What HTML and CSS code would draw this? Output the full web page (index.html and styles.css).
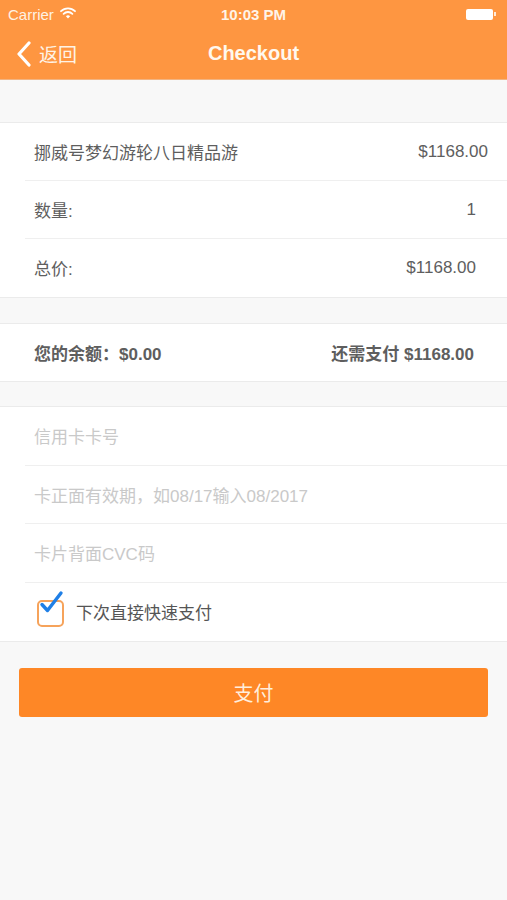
FILE: index.html
```html
<!DOCTYPE html>
<html lang="zh-CN">
<head>
<meta charset="utf-8"/>
<meta content="width=device-width, initial-scale=1.0" name="viewport"/>
<title>Checkout</title>
<link rel="stylesheet" href="styles.css">
</head>
<body>
<div class="topbar">
  <div class="status">
    <div class="carrier">Carrier
      <svg class="wifi" width="16" height="12" viewBox="0 0 16 12">
        <path d="M1 4.2a10 10 0 0 1 14 0" fill="none" stroke="#fff" stroke-width="1.8" stroke-linecap="round"/>
        <path d="M3.6 6.8a6.3 6.3 0 0 1 8.8 0" fill="none" stroke="#fff" stroke-width="1.8" stroke-linecap="round"/>
        <path d="M8 11.5 5.9 9.2a3 3 0 0 1 4.2 0z" fill="#fff"/>
      </svg>
    </div>
    <div class="time">10:03 PM</div>
    <div class="battery"><span class="cell"></span><span class="tip"></span></div>
  </div>
  <div class="nav">
    <div class="back">
      <svg width="18" height="26" viewBox="0 0 18 26"><path d="M14 2 4 13l10 11" fill="none" stroke="#fff" stroke-width="3.2" stroke-linecap="round" stroke-linejoin="round"/></svg>
      <span>返回</span>
    </div>
    <div class="title">Checkout</div>
  </div>
</div>

<div class="group first">
  <div class="row"><span>挪威号梦幻游轮八日精品游</span><span class="val wide">$1168.00</span></div>
  <div class="row"><span>数量:</span><span class="val">1</span></div>
  <div class="row"><span>总价:</span><span class="val">$1168.00</span></div>
</div>

<div class="group">
  <div class="row strong"><span>您的余额：$0.00</span><span class="val">还需支付 $1168.00</span></div>
</div>

<div class="group card">
  <div class="row hint">信用卡卡号</div>
  <div class="row hint">卡正面有效期，如08/17输入08/2017</div>
  <div class="row hint">卡片背面CVC码</div>
  <div class="row check">
    <span class="box">
      <svg width="30" height="30" viewBox="0 0 30 30"><path d="M6 14.5l5.5 6L25 3" fill="none" stroke="#1f7fe6" stroke-width="3.4" stroke-linecap="round" stroke-linejoin="round"/></svg>
    </span>
    <span>下次直接快速支付</span>
  </div>
</div>

<div class="pay">支付</div>
</body>
</html>
```

FILE: styles.css
```css
body { margin: 0; background: #f8f8f8; font-family: "Liberation Sans", "Noto Sans CJK SC", sans-serif; color: #5e5e5e; height: 900px; }
.topbar { background: #fe9641; color: #fff; height: 79px; border-bottom: 1px solid #f2b482; }
.status { height: 28px; display: flex; align-items: center; justify-content: space-between; padding: 0 8px; font-size: 15px; position: relative; }
.carrier { display: flex; align-items: center; gap: 6px; color: #fff2e4; }
.wifi { margin-top: -3px; }
.time { position: absolute; left: 0; right: 0; text-align: center; font-weight: bold; font-size: 15px; color: #fff4e8; }
.battery { display: flex; align-items: center; margin-right: 3px; }
.cell { width: 27px; height: 11px; background: #fff; border-radius: 2px; }
.tip { width: 2px; height: 4px; background: #fff; margin-left: 1px; opacity: 0.8; }
.nav { height: 51px; display: flex; align-items: center; position: relative; }
.back { display: flex; align-items: center; gap: 6px; padding-left: 15px; font-size: 19px; color: #fff3e6; position: relative; z-index: 1; }
.title { position: absolute; left: 0; right: 0; text-align: center; font-size: 20px; font-weight: bold; color: #fff8ee; }

.group { background: #fff; border-top: 1px solid #ebebeb; border-bottom: 1px solid #ebebeb; margin-top: 25px; }
.group.first { margin-top: 42px; }
.group.card { margin-top: 24px; }
.row { height: 58px; display: flex; align-items: center; justify-content: space-between; margin-left: 25px; padding: 0 31px 0 9px; font-size: 17px; border-bottom: 1px solid #efefef; box-sizing: border-box; }
.row:last-child { border-bottom: none; height: 57.5px; }
.val.wide { margin-right: -12px; }
.strong { font-weight: bold; font-size: 17px; padding-right: 33px; }
.card .row { height: 58.5px; }
.hint { color: #c9c9c9; }
.check { justify-content: flex-start; gap: 12px; padding-left: 12px; color: #555; }
.box { width: 23px; height: 23px; border: 2px solid #f6a35b; border-radius: 5px; position: relative; flex: none; margin-top: 4px; }
.box svg { position: absolute; left: -3px; top: -12px; }

.pay { margin: 26px 19px 0; height: 49px; background: #fe8726; border-radius: 3px; color: #ffeedd; font-size: 20px; display: flex; align-items: center; justify-content: center; }
```
